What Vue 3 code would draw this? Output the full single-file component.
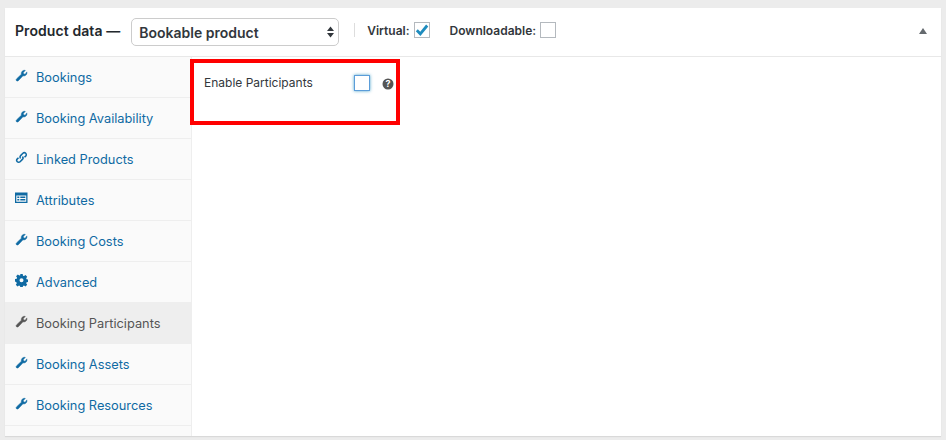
<template>
  <div class="page">
    <div class="panel">
      <div class="panel-head">
        <span class="title">Product data —</span>
        <div class="type-select">
          <span>Bookable product</span>
          <svg class="updown" width="7" height="12" viewBox="0 0 7 12"><path d="M3.500 0.500 7 5H0zM3.500 11.500 0 7h7z" fill="#32373c" /></svg>
        </div>
        <span class="divider"></span>
        <label class="opt">Virtual:
          <span class="box">
            <svg width="14" height="14" viewBox="0 0 14 14"><path d="M1.800 7.300 5.300 10.800 12.200 2.500" fill="none" stroke="#1e8cbe" stroke-width="2.800" /></svg>
          </span>
        </label>
        <label class="opt second">Downloadable: <span class="box"></span></label>
        <svg class="collapse" width="8" height="6" viewBox="0 0 8 6"><path d="M4 0 8 6H0z" fill="#656a6e" /></svg>
      </div>
      <div class="panel-body">
        <ul class="tabs">
          <li v-for="tab in tabs" :key="tab.name" :class="{ active: tab.name === current }">
            <svg class="tab-icon" width="13" height="13" viewBox="0 0 13 13">
              <path v-if="tab.icon === 'wrench'" class="wrench" d="M11.800 2.900c.3 1.200 0 2.300-.8 3.100-.8.800-2 1.100-3 .8l-4.700 4.900c-.5.500-1.300.5-1.800 0s-.5-1.300 0-1.800l4.900-4.700c-.3-1.100 0-2.200.8-3C8 1.400 9.200 1.100 10.300 1.400L8.300 3.400l.4 1.500 1.500.4z" />
              <path v-else-if="tab.icon === 'link'" d="M5.600 7.400c-.8-.8-.8-2 0-2.800l2.300-2.300c.8-.8 2-.8 2.800 0s.8 2 0 2.800L9.500 6.300M7.400 5.600c.8.8.8 2 0 2.800l-2.300 2.300c-.8.800-2 .8-2.800 0s-.8-2 0-2.800l1.200-1.200" fill="none" stroke="currentColor" stroke-width="1.500" />
              <path v-else-if="tab.icon === 'table'" fill-rule="evenodd" d="M0 .5h12.500v10.500H0zM1.300 3.500v6.200h9.900V3.500zM2.300 4.500h2V6h-2zM5.300 4.500h5V6h-5zM2.300 7h2v1.500h-2zM5.300 7h5v1.500h-5z" />
              <path v-else fill-rule="evenodd" d="M5.300 0h2.400l.3 1.700 1 .4L10.500 1.100l1.700 1.700-1 1.500.4 1 1.700.3v2.400l-1.700.3-.4 1 1 1.500-1.700 1.700-1.500-1-1 .4-.3 1.700H5.300L5 11.900l-1-.4-1.500 1-1.700-1.700 1-1.500-.4-1L0 7.500V5.100l1.700-.3.4-1-1-1.500 1.700-1.700 1.500 1 1-.4zM6.500 4.300a2 2 0 1 0 0 4 2 2 0 0 0 0-4z" />
            </svg>
            {{ tab.name }}
          </li>
        </ul>
        <div class="content">
          <div class="field">
            <span class="field-label">Enable Participants</span>
            <span class="box focused"></span>
            <svg class="help" width="12" height="12" viewBox="0 0 12 12">
              <circle cx="6" cy="6" r="5.500" fill="#555" />
              <text x="6" y="9.300" text-anchor="middle" class="help-mark">?</text>
            </svg>
          </div>
          <div class="highlight"></div>
        </div>
      </div>
    </div>
  </div>
</template>

<script setup>
const current = 'Booking Participants'

const tabs = [
  { name: 'Bookings', icon: 'wrench' },
  { name: 'Booking Availability', icon: 'wrench' },
  { name: 'Linked Products', icon: 'link' },
  { name: 'Attributes', icon: 'table' },
  { name: 'Booking Costs', icon: 'wrench' },
  { name: 'Advanced', icon: 'gear' },
  { name: 'Booking Participants', icon: 'wrench' },
  { name: 'Booking Assets', icon: 'wrench' },
  { name: 'Booking Resources', icon: 'wrench' }
]
</script>

<style scoped>
.page {
  width: 946px;
  height: 440px;
  box-sizing: border-box;
  padding: 8px 5px 4px;
  background-color: #ececec;
  font-family: Inter, "Liberation Sans", sans-serif;
  font-size: 12.8px;
  color: #32373c;
  overflow: hidden;
}

.panel {
  height: 100%;
  display: flex;
  flex-direction: column;
  background-color: #fff;
  box-shadow: 0 1px 1px rgba(0, 0, 0, 0.08);
}

.panel-head {
  height: 44px;
  flex: none;
  display: flex;
  align-items: center;
  padding: 0 0 4px 10px;
  border-bottom: 1px solid #e8e8e8;
}

.title {
  font-size: 14px;
  font-weight: 600;
  letter-spacing: 0.08px;
  color: #23282d;
}

.type-select {
  width: 208px;
  height: 28px;
  margin: 4px 0 0 11px;
  display: flex;
  align-items: center;
  justify-content: space-between;
  padding: 0 4px 0 7px;
  box-sizing: border-box;
  border: 1px solid #ccc;
  border-radius: 5px;
  font-size: 14px;
  font-weight: 600;
}

.divider {
  width: 1px;
  height: 14px;
  margin: 0 12px 0 15px;
  background-color: #ddd;
}

.opt {
  display: flex;
  align-items: center;
  gap: 4px;
  font-size: 12px;
  font-weight: 600;
}

.opt.second {
  margin-left: 20px;
}

.box {
  width: 16px;
  height: 16px;
  display: flex;
  align-items: center;
  justify-content: center;
  box-sizing: border-box;
  border: 1px solid #b4b9be;
  background-color: #fff;
}

.collapse {
  margin: 2px 14px 0 auto;
}

.panel-body {
  flex: 1;
  display: flex;
  min-height: 0;
}

.tabs {
  width: 187px;
  flex: none;
  margin: 0;
  padding: 0;
  list-style: none;
  box-sizing: border-box;
  background-color: #fafafa;
  border-right: 1px solid #eee;
}

.tabs li {
  height: 41px;
  display: flex;
  align-items: center;
  padding-left: 10px;
  box-sizing: border-box;
  border-bottom: 1px solid #eee;
  color: #0f6aa3;
}

.tabs li.active {
  color: #555;
  background-color: #eee;
  border-bottom-color: #eee;
}

.tab-icon {
  flex: none;
  margin-right: 8px;
  margin-top: -3px;
  fill: currentColor;
}

.wrench {
  stroke: currentColor;
  stroke-width: 0.5;
}

.content {
  flex: 1;
  position: relative;
}

.field {
  display: flex;
  align-items: center;
  padding: 18px 0 0 12px;
  font-size: 12px;
}

.field-label {
  width: 150px;
  margin-top: -2px;
}

.box.focused {
  border-color: #5b9dd9;
  box-shadow: 0 0 3px rgba(30, 140, 190, 0.8);
}

.help {
  margin: 2px 0 0 12px;
}

.help-mark {
  font-size: 9px;
  font-weight: 700;
  fill: #fff;
}

.highlight {
  position: absolute;
  left: -2px;
  top: 2px;
  width: 210px;
  height: 66px;
  box-sizing: border-box;
  border: 4px solid #f00;
}
</style>
